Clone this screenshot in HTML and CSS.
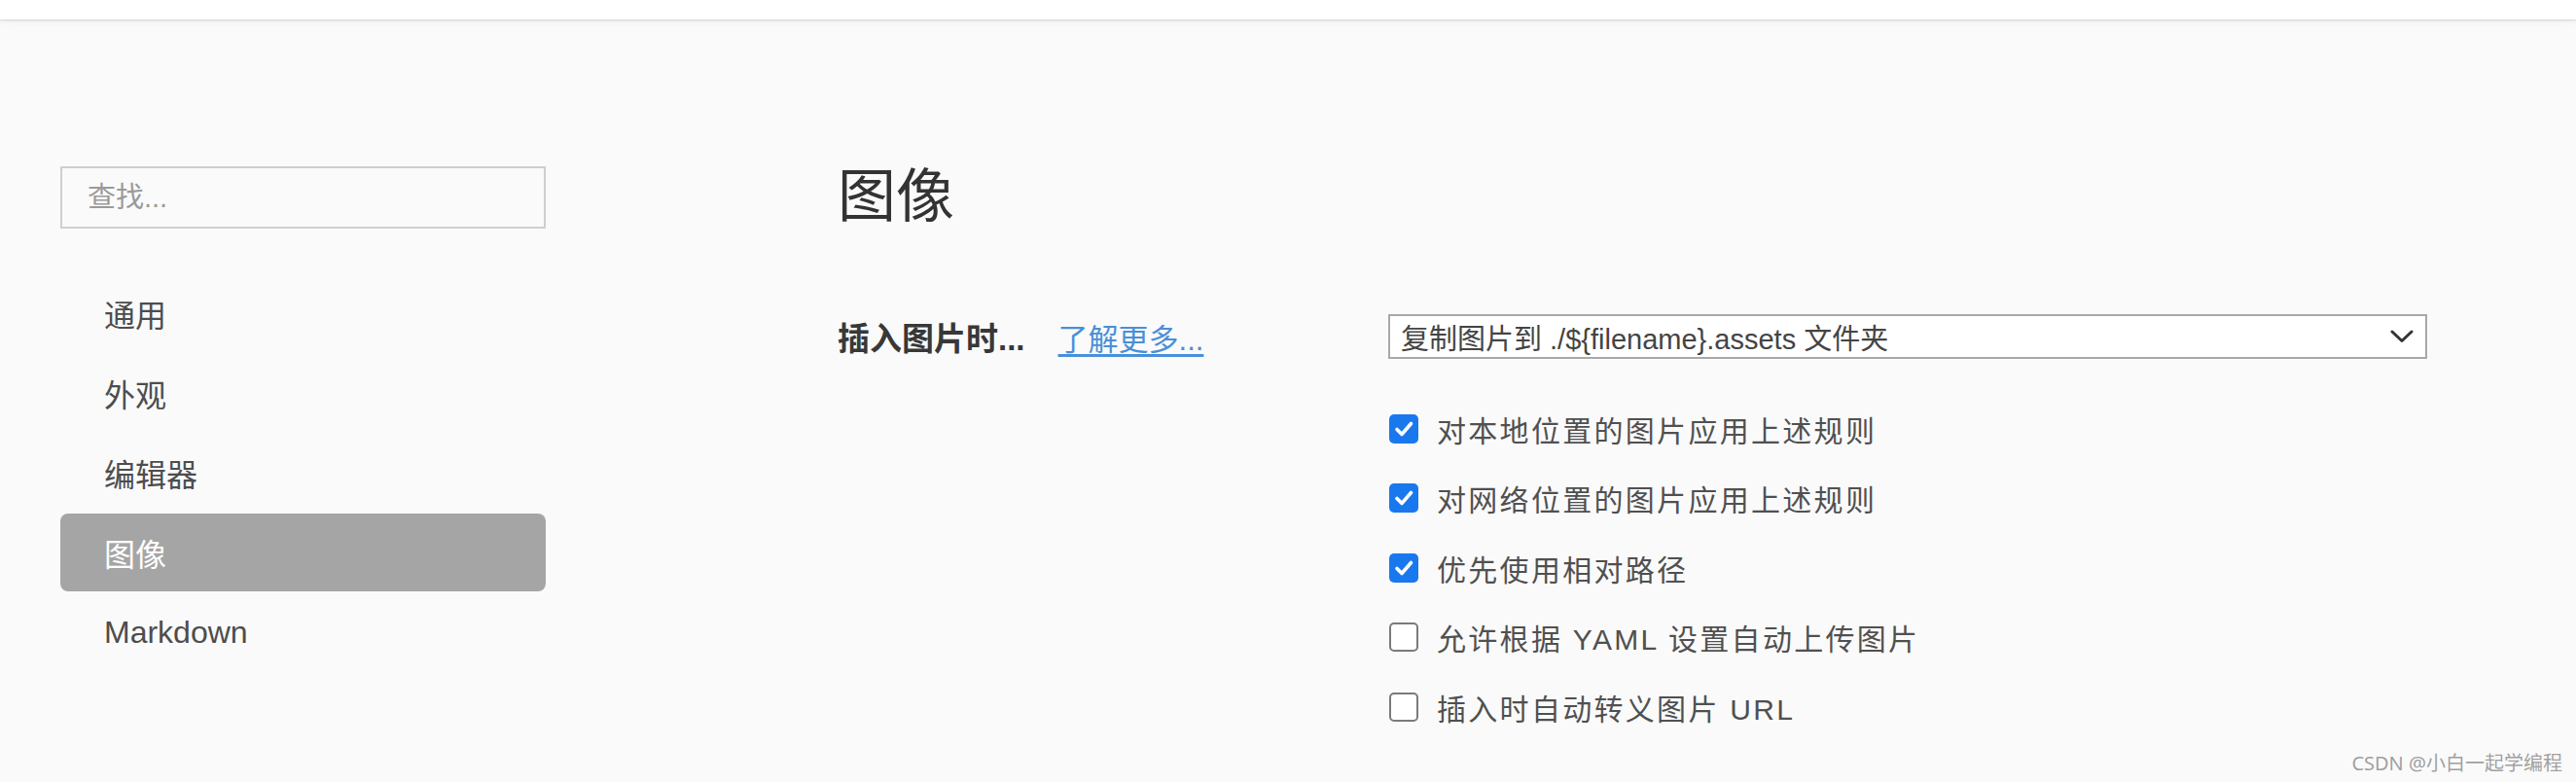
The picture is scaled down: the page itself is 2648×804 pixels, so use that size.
FILE: index.html
```html
<!DOCTYPE html>
<html lang="zh-CN">
<head>
    <meta charset="UTF-8">
    <meta name="viewport" content="width=device-width, initial-scale=1.0">
    <title>偏好设置 - 图像</title>
    <link rel="stylesheet" href="styles.css">
</head>
<body>
    <div class="topbar"></div>

    <div class="layout">
        <aside class="sidebar">
            <input class="search" type="text" placeholder="查找...">
            <nav class="nav">
                <a class="nav-item" href="#">通用</a>
                <a class="nav-item" href="#">外观</a>
                <a class="nav-item" href="#">编辑器</a>
                <a class="nav-item active" href="#">图像</a>
                <a class="nav-item" href="#">Markdown</a>
            </nav>
        </aside>

        <main class="content">
            <h1 class="title">图像</h1>

            <div class="setting-row">
                <div class="setting-label">
                    <span class="label-text">插入图片时...</span>
                    <a class="more-link" href="#">了解更多...</a>
                </div>

                <div class="setting-control">
                    <div class="select">
                        <span>复制图片到 ./${filename}.assets 文件夹</span>
                        <svg class="chevron" width="24" height="14" viewBox="0 0 24 14">
                            <polyline points="2,2 12,11.5 22,2" fill="none" stroke="#333" stroke-width="3" stroke-linecap="round" stroke-linejoin="round"/>
                        </svg>
                    </div>

                    <ul class="checks">
                        <li class="check-row">
                            <span class="box checked">
                                <svg width="30" height="30" viewBox="0 0 30 30"><path d="M8 15.5 L13 20.5 L22.5 9.5" fill="none" stroke="#fff" stroke-width="3.6" stroke-linecap="round" stroke-linejoin="round"/></svg>
                            </span>
                            对本地位置的图片应用上述规则
                        </li>
                        <li class="check-row">
                            <span class="box checked">
                                <svg width="30" height="30" viewBox="0 0 30 30"><path d="M8 15.5 L13 20.5 L22.5 9.5" fill="none" stroke="#fff" stroke-width="3.6" stroke-linecap="round" stroke-linejoin="round"/></svg>
                            </span>
                            对网络位置的图片应用上述规则
                        </li>
                        <li class="check-row">
                            <span class="box checked">
                                <svg width="30" height="30" viewBox="0 0 30 30"><path d="M8 15.5 L13 20.5 L22.5 9.5" fill="none" stroke="#fff" stroke-width="3.6" stroke-linecap="round" stroke-linejoin="round"/></svg>
                            </span>
                            优先使用相对路径
                        </li>
                        <li class="check-row">
                            <span class="box"></span>
                            允许根据 YAML 设置自动上传图片
                        </li>
                        <li class="check-row">
                            <span class="box"></span>
                            插入时自动转义图片 URL
                        </li>
                    </ul>
                </div>
            </div>
        </main>
    </div>

    <div class="watermark">CSDN @小白一起学编程</div>
</body>
</html>
```

FILE: styles.css
```css
body {
    font-family: "Liberation Sans", "Noto Sans CJK SC", sans-serif;
    background-color: #fafafa;
    color: #4a4a4a;
    margin: 0;
    height: 804px;
    overflow: hidden;
    position: relative;
}

.topbar {
    height: 20px;
    background-color: #fff;
    box-shadow: 0 1px 2px rgba(0, 0, 0, 0.14), 0 3px 10px rgba(0, 0, 0, 0.04);
    position: relative;
}

.layout {
    display: flex;
    padding-left: 62px;
}

/* sidebar */
.sidebar {
    width: 499px;
    padding-top: 151px;
    flex-shrink: 0;
}

.search {
    display: block;
    box-sizing: border-box;
    width: 100%;
    height: 64px;
    padding: 0 26px;
    border: 2px solid #cfcfcf;
    background-color: #fafafa;
    font-family: inherit;
    font-size: 29px;
    color: #555;
    outline: none;
}

.search::placeholder {
    color: #9a9a9a;
}

.nav {
    display: flex;
    flex-direction: column;
    gap: 2px;
    margin-top: 47px;
}

.nav-item {
    display: flex;
    align-items: center;
    height: 80px;
    padding-left: 45px;
    border-radius: 8px;
    font-size: 32px;
    color: #4d4d4d;
    text-decoration: none;
}

.nav-item.active {
    background-color: #a5a5a5;
    color: #fff;
}

/* content */
.content {
    margin-left: 300px;
    padding-top: 148px;
}

.title {
    margin: 0;
    font-size: 60px;
    line-height: 70px;
    font-weight: normal;
    color: #333;
}

.setting-row {
    display: grid;
    grid-template-columns: 566px 1068px;
    margin-top: 85px;
}

.setting-label {
    display: flex;
    align-items: center;
    gap: 34px;
    height: 46px;
}

.label-text {
    font-size: 33px;
    font-weight: bold;
    color: #383838;
}

.more-link {
    font-size: 31px;
    color: #4a8fd8;
    text-decoration: underline;
    text-underline-offset: 4px;
}

.select {
    box-sizing: border-box;
    display: flex;
    align-items: center;
    justify-content: space-between;
    height: 46px;
    padding: 0 12px 0 11px;
    border: 2px solid #a8a8a8;
    background-color: #fff;
    font-size: 29px;
    color: #444;
}

.checks {
    list-style: none;
    margin: 36px 0 0;
    padding: 0;
}

.check-row {
    display: flex;
    align-items: center;
    gap: 19px;
    height: 71.5px;
    padding-left: 1px;
    font-size: 30px;
    letter-spacing: 2.3px;
    color: #505050;
}

.box {
    box-sizing: border-box;
    width: 30px;
    height: 30px;
    border: 2px solid #7a7a7a;
    border-radius: 5px;
    background-color: #fff;
    flex-shrink: 0;
}

.box.checked {
    border: none;
    background-color: #1a78ee;
}

.box svg {
    display: block;
}

.watermark {
    position: absolute;
    right: 14px;
    bottom: 6px;
    font-family: "Noto Sans", "Noto Sans CJK SC", sans-serif;
    font-size: 20px;
    color: #a0a0a0;
    text-shadow: 0 0 2px #fff;
}
```
